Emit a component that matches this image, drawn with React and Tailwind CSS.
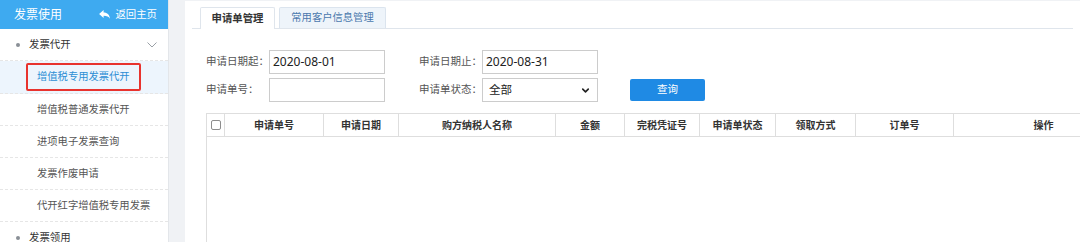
import { ChevronDown } from 'lucide-react'

const subItems = [
  { label: '增值税专用发票代开', active: true },
  { label: '增值税普通发票代开' },
  { label: '进项电子发票查询' },
  { label: '发票作废申请' },
  { label: '代开红字增值税专用发票' },
]

const columns = [
  { label: '申请单号', w: 'w-[99px]' },
  { label: '申请日期', w: 'w-[75px]' },
  { label: '购方纳税人名称', w: 'w-[157px]' },
  { label: '金额', w: 'w-[69px]' },
  { label: '完税凭证号', w: 'w-[75px]' },
  { label: '申请单状态', w: 'w-[76px]' },
  { label: '领取方式', w: 'w-[80px]' },
  { label: '订单号', w: 'w-[98px]' },
  { label: '操作', w: 'w-[180px]' },
]

function Sidebar() {
  return (
    <aside className="flex flex-col w-[169px] shrink-0 bg-white border-r border-[#e3e6ea] overflow-hidden">
      {/* Header */}
      <div className="flex shrink-0 items-center justify-between h-[29px] bg-[#3eaaf0] pl-[14px] pr-[11px] text-white">
        <span className="text-[12px]">发票使用</span>
        <span className="flex items-center gap-[5px] text-[10.4px]">
          <svg width="11" height="9" viewBox="0 0 12 10" fill="currentColor">
            <path d="M0 4.5L5 0v2.7c4.2 0 6.8 2.6 7 7-1.3-2.4-3.4-3.3-7-3.3V9z" />
          </svg>
          返回主页
        </span>
      </div>

      {/* Menu */}
      <div className="flex shrink-0 items-center h-[32px] border-b border-dashed border-[#e6e6e6] pl-[16px] pr-[11px]">
        <span className="w-[4px] h-[4px] rounded-full bg-[#8a8f96]" />
        <span className="ml-[9px] text-[10.4px] text-[#333] flex-1">发票代开</span>
        <svg width="10" height="6" viewBox="0 0 10 6" fill="none" stroke="#9aa0a6" strokeWidth="1">
          <path d="M0.5 0.5L5 5l4.5-4.5" />
        </svg>
      </div>
      {subItems.map((item) =>
        item.active ? (
          <div key={item.label} className="flex shrink-0 items-center h-[33px] bg-[#edf5fd] border-b border-dashed border-[#e6e6e6] pl-[26px]">
            <span className="flex items-center h-[28px] px-[9px] border-2 border-[#e8332e] rounded-[2px] text-[10.3px] text-[#2c8ed4]">
              {item.label}
            </span>
          </div>
        ) : (
          <div key={item.label} className="flex shrink-0 items-center h-[32px] border-b border-dashed border-[#e6e6e6] pl-[37px] text-[10.3px] text-[#555]">
            {item.label}
          </div>
        )
      )}
      <div className="flex shrink-0 items-center h-[32px] pl-[16px]">
        <span className="w-[4px] h-[4px] rounded-full bg-[#8a8f96]" />
        <span className="ml-[9px] text-[10.4px] text-[#333]">发票领用</span>
      </div>
    </aside>
  )
}

function Field({ label, children }) {
  return (
    <div className="flex items-center">
      <span className="w-[63px] text-[10.5px] text-[#555]">{label}</span>
      {children}
    </div>
  )
}

function Content() {
  return (
    <main className="flex flex-col flex-1 min-w-0 bg-white ml-[16px] mt-[1px] px-[7px] overflow-hidden">
      {/* Tabs */}
      <div className="flex shrink-0 items-end h-[28px] pl-[8px] border-b border-[#dfe5ec]">
        <div className="flex items-center justify-center w-[75px] h-[22px] -mb-px bg-white border border-b-0 border-[#dfe5ec] rounded-t-[2px] text-[10.4px] font-bold text-[#333] whitespace-nowrap">
          申请单管理
        </div>
        <div className="flex items-center justify-center w-[107px] h-[21px] ml-[4px] bg-[#eef4fa] border border-b-0 border-[#dbe4ee] rounded-t-[2px] text-[10.3px] text-[#4a78ad] whitespace-nowrap">
          常用客户信息管理
        </div>
      </div>

      {/* Form */}
      <div className="flex flex-col gap-[4px] mt-[21px] pl-[14px]">
        <div className="flex items-center gap-[34px]">
          <Field label="申请日期起：">
            <div className="flex items-center w-[116px] h-[24px] border border-[#ccc] pl-[3px] text-[12px] text-[#222]">2020-08-01</div>
          </Field>
          <Field label="申请日期止：">
            <div className="flex items-center w-[116px] h-[24px] border border-[#ccc] pl-[3px] text-[12px] text-[#222]">2020-08-31</div>
          </Field>
        </div>
        <div className="flex items-center gap-[34px]">
          <Field label="申请单号：">
            <div className="w-[116px] h-[24px] border border-[#ccc]" />
          </Field>
          <Field label="申请单状态：">
            <div className="flex items-center justify-between w-[116px] h-[24px] border border-[#ccc] pl-[6px] pr-[6px] text-[11.5px] text-[#222]">
              全部
              <ChevronDown size={11} strokeWidth={3.5} color="#222" />
            </div>
          </Field>
          <button className="flex items-center justify-center w-[75px] h-[22px] -ml-[2px] bg-[#1f8ae4] rounded-[2px] text-[10.5px] text-white">
            查询
          </button>
        </div>
      </div>

      {/* Table */}
      <div className="flex flex-col flex-1 mt-[11px] ml-[14px] w-[930px] border-l border-[#dedede]">
        <div className="flex shrink-0 h-[24px] border-y border-[#dedede]">
          <div className="flex shrink-0 items-center justify-center w-[18px] border-r border-[#dedede]">
            <span className="w-[10px] h-[10px] border border-[#8d8d8d] rounded-[2px] bg-white" />
          </div>
          {columns.map((c) => (
            <div key={c.label} className={`flex shrink-0 items-center justify-center ${c.w} border-r border-[#dedede] text-[10px] font-bold text-[#333]`}>
              {c.label}
            </div>
          ))}
        </div>
        <div className="flex-1" />
      </div>
    </main>
  )
}

export default function App() {
  return (
    <div className="flex w-[1080px] h-[242px] overflow-hidden bg-[#f0f2f5] font-['Noto_Sans','Noto_Sans_CJK_SC',sans-serif]">
      <Sidebar />
      <Content />
    </div>
  )
}
